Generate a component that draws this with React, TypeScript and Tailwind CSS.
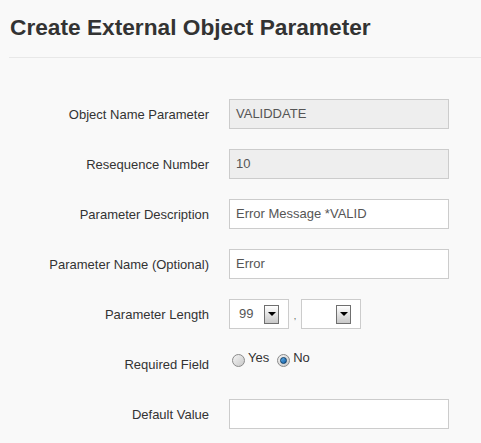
import React from 'react';

function Field({ label, children }: { label: string; children: React.ReactNode }) {
  return (
    <div className="flex h-[30px] items-center">
      <div className="w-[209px] text-right text-[13px] leading-[15px] text-[#333]">{label}</div>
      <div className="ml-[20px] flex h-full items-center">{children}</div>
    </div>
  );
}

function TextBox({ value, readOnly }: { value: string; readOnly?: boolean }) {
  return (
    <div
      className={
        'flex h-[30px] w-[220px] items-center border border-[#ccc] px-[6px] text-[13px] text-[#555] ' +
        (readOnly ? 'bg-[#eee]' : 'bg-white')
      }
    >
      {value}
    </div>
  );
}

function Select({ value }: { value: string }) {
  return (
    <div className="flex h-[30px] w-[60px] items-center border border-[#ccc] bg-white pl-[9px] pr-[9px] text-[13px] text-[#555]">
      <span className="flex-1">{value}</span>
      <span className="flex h-[19px] w-[15px] items-center justify-center border border-[#6f6f6f] bg-gradient-to-b from-white to-[#c8c8c8]">
        <span className="h-0 w-0 border-x-[4px] border-t-[4px] border-x-transparent border-t-black" />
      </span>
    </div>
  );
}

function Radio({ checked }: { checked?: boolean }) {
  return (
    <span className="mt-[4px] flex h-[13px] w-[13px] items-center justify-center rounded-full border border-[#8a8a8a] bg-gradient-to-br from-[#f4f4f4] to-[#c9c9c9]">
      {checked && <span className="h-[7px] w-[7px] rounded-full border border-[#0d3d66] bg-gradient-to-br from-[#5fb0e8] to-[#0f5ea8]" />}
    </span>
  );
}

export default function App() {
  return (
    <div className="min-h-screen bg-[#f9f9f9] font-['Liberation_Sans',Arial,sans-serif] text-[#333]">
      <h1 className="pl-[10px] pt-[15px] text-[22.7px] font-bold leading-[24px] text-[#333]">
        Create External Object Parameter
      </h1>
      <div className="ml-[9px] mt-[18px] h-px bg-[#e8e8e8]" />

      <div className="mt-[41px] flex flex-col gap-[20px]">
        <Field label="Object Name Parameter">
          <TextBox value="VALIDDATE" readOnly />
        </Field>
        <Field label="Resequence Number">
          <TextBox value="10" readOnly />
        </Field>
        <Field label="Parameter Description">
          <TextBox value="Error Message *VALID" />
        </Field>
        <Field label="Parameter Name (Optional)">
          <TextBox value="Error" />
        </Field>
        <Field label="Parameter Length">
          <Select value="99" />
          <span className="w-[12px] pt-[6px] text-center text-[9px] text-[#555]">,</span>
          <Select value="" />
        </Field>
        <div className="flex h-[30px] items-center">
          <div className="w-[209px] text-right text-[13px] leading-[15px] text-[#333]">Required Field</div>
          <div className="ml-[20px] flex h-full items-start pt-[1px] text-[13px] leading-[15px] text-[#333]">
            <span className="ml-[3px]"><Radio /></span>
            <span className="ml-[3px]">Yes</span>
            <span className="ml-[8px]"><Radio checked /></span>
            <span className="ml-[3px]">No</span>
          </div>
        </div>
        <Field label="Default Value">
          <TextBox value="" />
        </Field>
      </div>
    </div>
  );
}
